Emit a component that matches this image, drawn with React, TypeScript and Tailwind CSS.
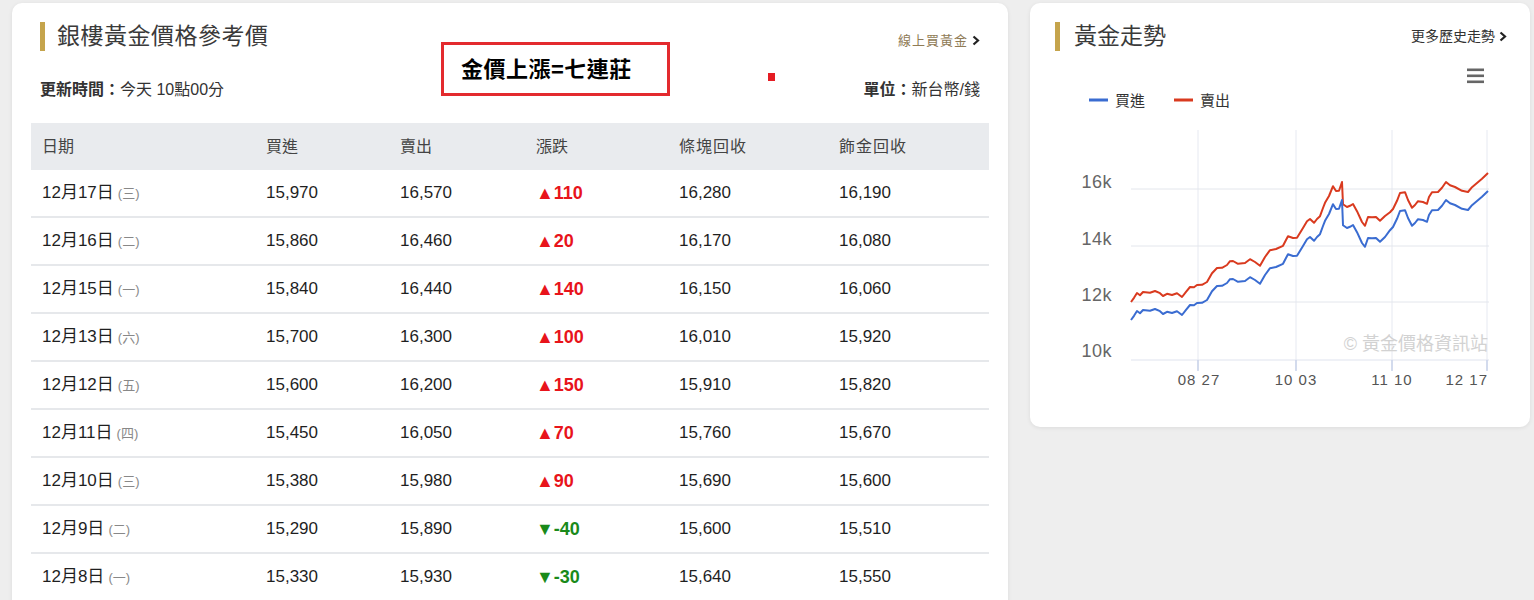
import React from "react";

const FONT = { fontFamily: '"Liberation Sans", "Noto Sans CJK TC", sans-serif' };

type Row = { d: string; w: string; buy: string; sell: string; chg: number; bar: string; jew: string };

const rows: Row[] = [
  { d: "12月17日", w: "(三)", buy: "15,970", sell: "16,570", chg: 110, bar: "16,280", jew: "16,190" },
  { d: "12月16日", w: "(二)", buy: "15,860", sell: "16,460", chg: 20, bar: "16,170", jew: "16,080" },
  { d: "12月15日", w: "(一)", buy: "15,840", sell: "16,440", chg: 140, bar: "16,150", jew: "16,060" },
  { d: "12月13日", w: "(六)", buy: "15,700", sell: "16,300", chg: 100, bar: "16,010", jew: "15,920" },
  { d: "12月12日", w: "(五)", buy: "15,600", sell: "16,200", chg: 150, bar: "15,910", jew: "15,820" },
  { d: "12月11日", w: "(四)", buy: "15,450", sell: "16,050", chg: 70, bar: "15,760", jew: "15,670" },
  { d: "12月10日", w: "(三)", buy: "15,380", sell: "15,980", chg: 90, bar: "15,690", jew: "15,600" },
  { d: "12月9日", w: "(二)", buy: "15,290", sell: "15,890", chg: -40, bar: "15,600", jew: "15,510" },
  { d: "12月8日", w: "(一)", buy: "15,330", sell: "15,930", chg: -30, bar: "15,640", jew: "15,550" },
];

const redPage: [number, number][] = [
  [1131, 302], [1134, 297], [1137, 293], [1140, 296], [1143, 292], [1150, 292], [1155, 291], [1160, 294],
  [1163, 296], [1167, 293], [1172, 295], [1177, 294], [1182, 297], [1186, 291], [1190, 287], [1194, 288],
  [1197, 285], [1202, 284], [1207, 282], [1212, 274], [1217, 268], [1222, 267], [1227, 265], [1230, 262],
  [1233, 261], [1238, 263], [1245, 263], [1250, 260], [1255, 262], [1260, 265], [1265, 257], [1270, 251],
  [1276, 249], [1283, 245], [1286, 240], [1288, 237], [1293, 238], [1297, 237], [1303, 228], [1307, 222],
  [1310, 219], [1314, 222], [1317, 219], [1320, 217], [1323, 208], [1325, 202], [1329, 196], [1333, 187],
  [1336, 191], [1339, 190], [1342, 182], [1343, 205], [1347, 207], [1350, 205], [1353, 204], [1357, 212],
  [1362, 222], [1365, 225], [1368, 217], [1372, 218], [1376, 217], [1380, 220], [1385, 216], [1390, 213],
  [1393, 209], [1397, 200], [1400, 193], [1405, 193], [1408, 200], [1412, 207], [1415, 205], [1418, 202],
  [1423, 202], [1427, 203], [1429, 197], [1432, 193], [1438, 192], [1442, 187], [1446, 182], [1450, 186],
  [1455, 187], [1462, 190], [1468, 192], [1472, 188], [1477, 183], [1482, 178], [1488, 173],
];

const OX = 1030;
const OY = 55;

function toPath(pts: [number, number][], offset: (x: number) => number) {
  return pts
    .map(([x, y], i) => {
      const jit = i % 2 === 0 ? 0 : i % 4 === 1 ? 0.8 : -0.8;
      return `${i === 0 ? "M" : "L"}${(x - OX).toFixed(1)},${(y - OY + offset(x) + jit).toFixed(1)}`;
    })
    .join(" ");
}

const redPath = toPath(redPage, () => 0);
const bluePath = toPath(redPage, (x) => (x === 1342 ? 18 : x > 1342 && x < 1386 ? 21 : 18));

function Chart() {
  const grid = [134, 191, 247];
  const vx = [168, 266, 362, 457];
  return (
    <svg width={500} height={365} className="block" style={FONT}>
      <rect x={437} y={13.5} width={17} height={2.6} fill="#666" />
      <rect x={437} y={19.5} width={17} height={2.6} fill="#666" />
      <rect x={437} y={25.5} width={17} height={2.6} fill="#666" />
      <line x1={59} x2={78} y1={45} y2={45} stroke="#3a6cd1" strokeWidth={3} />
      <text x={85} y={51} fontSize={15} fill="#333">買進</text>
      <line x1={144} x2={163} y1={45} y2={45} stroke="#d93a1f" strokeWidth={3} />
      <text x={170} y={51} fontSize={15} fill="#333">賣出</text>
      {vx.map((x) => (
        <line key={x} x1={x} x2={x} y1={75} y2={315} stroke="#e6e9f1" strokeWidth={1} />
      ))}
      {grid.map((y) => (
        <line key={y} x1={101} x2={459} y1={y} y2={y} stroke="#e3e6ec" strokeWidth={1} />
      ))}
      <line x1={101} x2={459} y1={305} y2={305} stroke="#dfe3ee" strokeWidth={1} />
      {vx.map((x) => (
        <line key={"t" + x} x1={x} x2={x} y1={305} y2={316} stroke="#c9d3ea" strokeWidth={1.5} />
      ))}
      <text x={82} y={133} fontSize={18} fill="#666" textAnchor="end" letterSpacing={0.5}>16k</text>
      <text x={82} y={190} fontSize={18} fill="#666" textAnchor="end" letterSpacing={0.5}>14k</text>
      <text x={82} y={246} fontSize={18} fill="#666" textAnchor="end" letterSpacing={0.5}>12k</text>
      <text x={82} y={302} fontSize={18} fill="#666" textAnchor="end" letterSpacing={0.5}>10k</text>
      <text x={169} y={330} fontSize={15} fill="#555" textAnchor="middle" letterSpacing={1}>08 27</text>
      <text x={266} y={330} fontSize={15} fill="#555" textAnchor="middle" letterSpacing={1}>10 03</text>
      <text x={362} y={330} fontSize={15} fill="#555" textAnchor="middle" letterSpacing={1}>11 10</text>
      <text x={458} y={330} fontSize={15} fill="#555" textAnchor="end" letterSpacing={1}>12 17</text>
      <text x={458} y={295} fontSize={18} fill="#d2d2d2" textAnchor="end">© 黃金價格資訊站</text>
      <path d={redPath} fill="none" stroke="#d93a1f" strokeWidth={2} strokeLinejoin="round" />
      <path d={bluePath} fill="none" stroke="#3a6cd1" strokeWidth={2} strokeLinejoin="round" />
    </svg>
  );
}

function Chevron() {
  return (
    <svg width="8" height="11" viewBox="0 0 8 11" className="inline-block ml-[4px]">
      <path d="M1.5 1.5 L6 5.5 L1.5 9.5" fill="none" stroke="#222" strokeWidth="2.2" />
    </svg>
  );
}

export default function App() {
  return (
    <div className="min-h-[600px] bg-[#eeeeee] pl-[12px] pt-[3px] flex items-start gap-[22px] overflow-hidden" style={FONT}>
      <div className="relative w-[996px] h-[640px] bg-white rounded-[10px] shadow-[0_1px_4px_rgba(0,0,0,0.08)] px-[19px] pt-[19px]">
        <div className="px-[9px]">
          <div className="flex justify-between items-end h-[29px]">
            <div className="flex items-center h-full">
              <div className="w-[5px] h-[29px] bg-[#c5a44c]" />
              <div className="ml-[12px] text-[23px] text-[#3a3a3a] leading-none tracking-[0.5px]">銀樓黃金價格參考價</div>
            </div>
            <div className="flex items-center text-[13px] text-[#8f7b56] mb-[1px] tracking-[1px]">
              線上買黃金
              <Chevron />
            </div>
          </div>
          <div className="mt-[29px] h-[20px] flex justify-between items-center text-[16px] text-[#333]">
            <div>
              <span className="font-bold">更新時間：</span>今天 10點00分
            </div>
            <div>
              <span className="font-bold">單位：</span>新台幣/錢
            </div>
          </div>
        </div>
        <div className="mt-[23px]">
          <div className="grid grid-cols-[224px_134px_136px_143px_160px_1fr] pl-[11px] h-[47px] items-center bg-[#e9ebee] text-[16px] text-[#444]">
            <div>日期</div>
            <div>買進</div>
            <div>賣出</div>
            <div>漲跌</div>
            <div className="tracking-[1px]">條塊回收</div>
            <div className="tracking-[1px]">飾金回收</div>
          </div>
          {rows.map((r) => (
            <div
              key={r.d}
              className="grid grid-cols-[224px_134px_136px_143px_160px_1fr] pl-[11px] h-[48px] items-center border-b-2 border-[#e6e8eb] text-[17px] text-[#1f1f1f]"
            >
              <div className="flex items-baseline">
                <span className="text-[17px]">{r.d}</span>
                <span className="ml-[4px] text-[13px] text-[#888]">{r.w}</span>
              </div>
              <div>{r.buy}</div>
              <div>{r.sell}</div>
              <div className={r.chg > 0 ? "text-[#e8141b] font-bold text-[18px]" : "text-[#1a8a1a] font-bold text-[18px]"}>
                {r.chg > 0 ? "▲" + r.chg : "▼" + r.chg}
              </div>
              <div>{r.bar}</div>
              <div>{r.jew}</div>
            </div>
          ))}
        </div>
        <div className="absolute left-[429px] top-[39px] w-[229px] h-[54px] border-[3px] border-[#e32a2e] bg-white flex items-center pl-[17px] text-[22px] font-bold text-black tracking-[0.5px]">
          金價上漲=七連莊
        </div>
        <div className="absolute left-[756px] top-[70px] w-[7px] h-[8px] bg-[#e51c23]" />
      </div>
      <div className="w-[500px] h-[424px] bg-white rounded-[10px] shadow-[0_1px_4px_rgba(0,0,0,0.08)] pt-[19px]">
        <div className="flex justify-between items-center h-[29px] pl-[25px] pr-[23px]">
          <div className="flex items-center">
            <div className="w-[5px] h-[29px] bg-[#c5a44c]" />
            <div className="ml-[14px] text-[23px] text-[#3a3a3a] leading-none">黃金走勢</div>
          </div>
          <div className="flex items-center text-[14px] text-[#333]">
            更多歷史走勢
            <Chevron />
          </div>
        </div>
        <div className="mt-[4px]">
          <Chart />
        </div>
      </div>
    </div>
  );
}
